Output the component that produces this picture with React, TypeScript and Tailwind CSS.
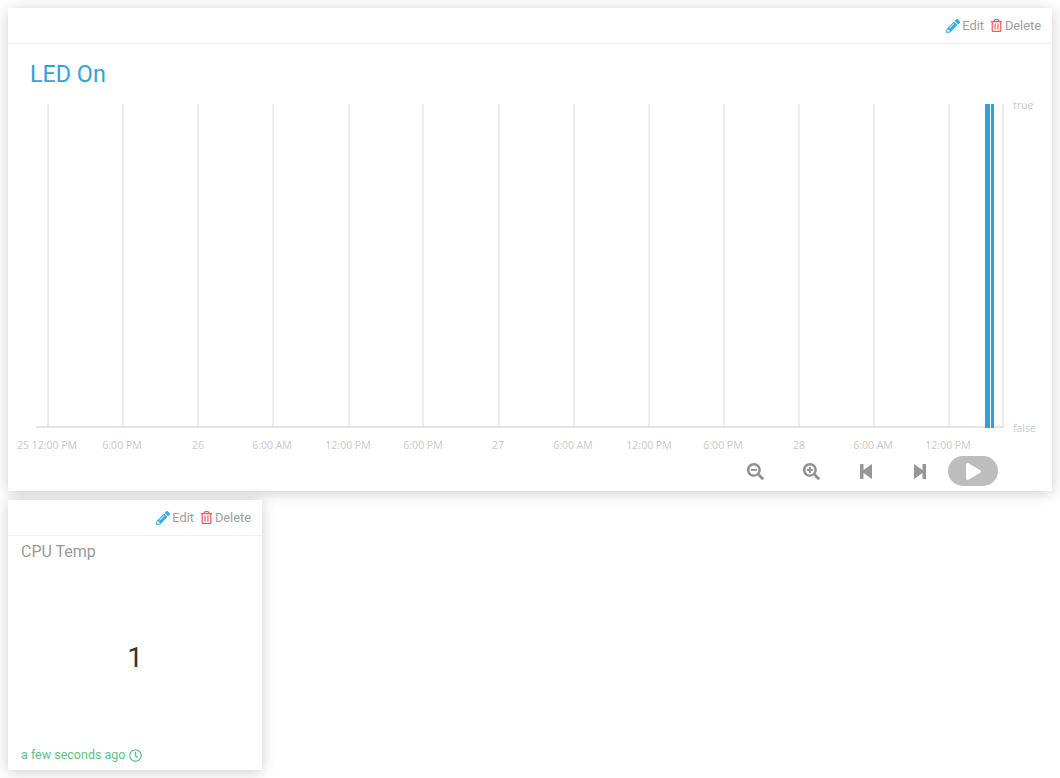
import { FaPencilAlt, FaRegTrashAlt, FaSearchMinus, FaSearchPlus, FaPlay, FaRegClock } from "react-icons/fa";

const gridLines = [48, 123, 198, 273, 349, 423, 499, 574, 649, 724, 799, 874, 949];

const xLabels = [
    { x: 47, t: "25 12:00 PM" },
    { x: 122, t: "6:00 PM" },
    { x: 198, t: "26" },
    { x: 272, t: "6:00 AM" },
    { x: 348, t: "12:00 PM" },
    { x: 423, t: "6:00 PM" },
    { x: 498, t: "27" },
    { x: 573, t: "6:00 AM" },
    { x: 649, t: "12:00 PM" },
    { x: 723, t: "6:00 PM" },
    { x: 799, t: "28" },
    { x: 873, t: "6:00 AM" },
    { x: 948, t: "12:00 PM" },
];

function CardActions() {
    return (
        <div className="h-[36px] flex items-center justify-end pr-[11px] gap-[6px] border-b border-[#f0f0f0] text-[12.8px] text-[#9e9e9e]">
            <span className="flex items-center gap-[2px]">
                <FaPencilAlt className="text-[#35ace8] text-[14px]" />
                Edit
            </span>
            <span className="flex items-center gap-[2px]">
                <FaRegTrashAlt className="text-[#ee5a63] text-[13px]" />
                Delete
            </span>
        </div>
    );
}

function LedChart() {
    return (
        <svg width="1044" height="355" viewBox="8 100 1044 355" className="block font-['Open_Sans',sans-serif]">
            {gridLines.map((x) => (
                <line key={x} x1={x} y1="104" x2={x} y2="427" stroke="#dadada" strokeWidth="1" />
            ))}
            <line x1="1003" y1="104" x2="1003" y2="427" stroke="#dadada" strokeWidth="1" />
            <line x1="36" y1="427" x2="1004" y2="427" stroke="#cccccc" strokeWidth="1" />
            <rect x="985" y="104" width="5" height="324" fill="#2aa3dc" />
            <rect x="991" y="104" width="3" height="324" fill="#2aa3dc" />
            <text x="1013" y="109" fontSize="10.5" fill="#c8c8c8">true</text>
            <text x="1013" y="432" fontSize="10.5" fill="#c8c8c8">false</text>
            {xLabels.map((l) => (
                <text key={l.x} x={l.x} y="449" fontSize="10.5" fill="#c8c8c8" textAnchor="middle">{l.t}</text>
            ))}
        </svg>
    );
}

export default function App() {
    return (
        <div className="w-[1060px] h-[778px] bg-white pt-[8px] pl-[8px] overflow-hidden font-['Roboto',sans-serif]">
            <div className="w-[1044px] h-[483px] bg-white shadow-[0_2px_14px_rgba(0,0,0,0.2)]">
                <CardActions />
                <div className="h-[56px] pl-[22px] pt-[15px] text-[23.3px] leading-[30px] text-[#2fa3dc]">LED On</div>
                <LedChart />
                <div className="h-[30px] mt-[1px] flex items-center justify-end pr-[54px] text-[#8f8f8f] text-[17px]">
                    <FaSearchMinus className="mr-[39px] ml-[2px]" />
                    <FaSearchPlus className="mr-[40px]" />
                    <svg width="12" height="15" viewBox="0 0 12 15" fill="#969696" className="mr-[42px]">
                        <path d="M0 0h3.5v6L12 0v15L3.5 9v6H0z" />
                    </svg>
                    <svg width="12" height="15" viewBox="0 0 12 15" fill="#969696" className="mr-[22px]">
                        <path d="M12 0H8.5v6L0 0v15l8.5-6v6H12z" />
                    </svg>
                    <div className="w-[50px] h-[30px] rounded-full bg-[#bdbdbd] flex items-center justify-center">
                        <FaPlay className="text-white text-[17px]" />
                    </div>
                </div>
            </div>

            <div className="w-[254px] h-[270px] mt-[9px] bg-white shadow-[0_2px_14px_rgba(0,0,0,0.2)] flex flex-col">
                <CardActions />
                <div className="px-[13px] pt-[6px] text-[16px] leading-[20px] text-[#9a9a9a]">CPU Temp</div>
                <div className="flex-1 flex items-center justify-center text-[28px] text-[#333333] pt-[7px]">1</div>
                <div className="px-[13px] pb-[7px] flex items-center gap-[4px] text-[12.5px] leading-[16px] text-[#5fc08a]">
                    a few seconds ago
                    <FaRegClock className="text-[13px]" />
                </div>
            </div>
        </div>
    );
}
